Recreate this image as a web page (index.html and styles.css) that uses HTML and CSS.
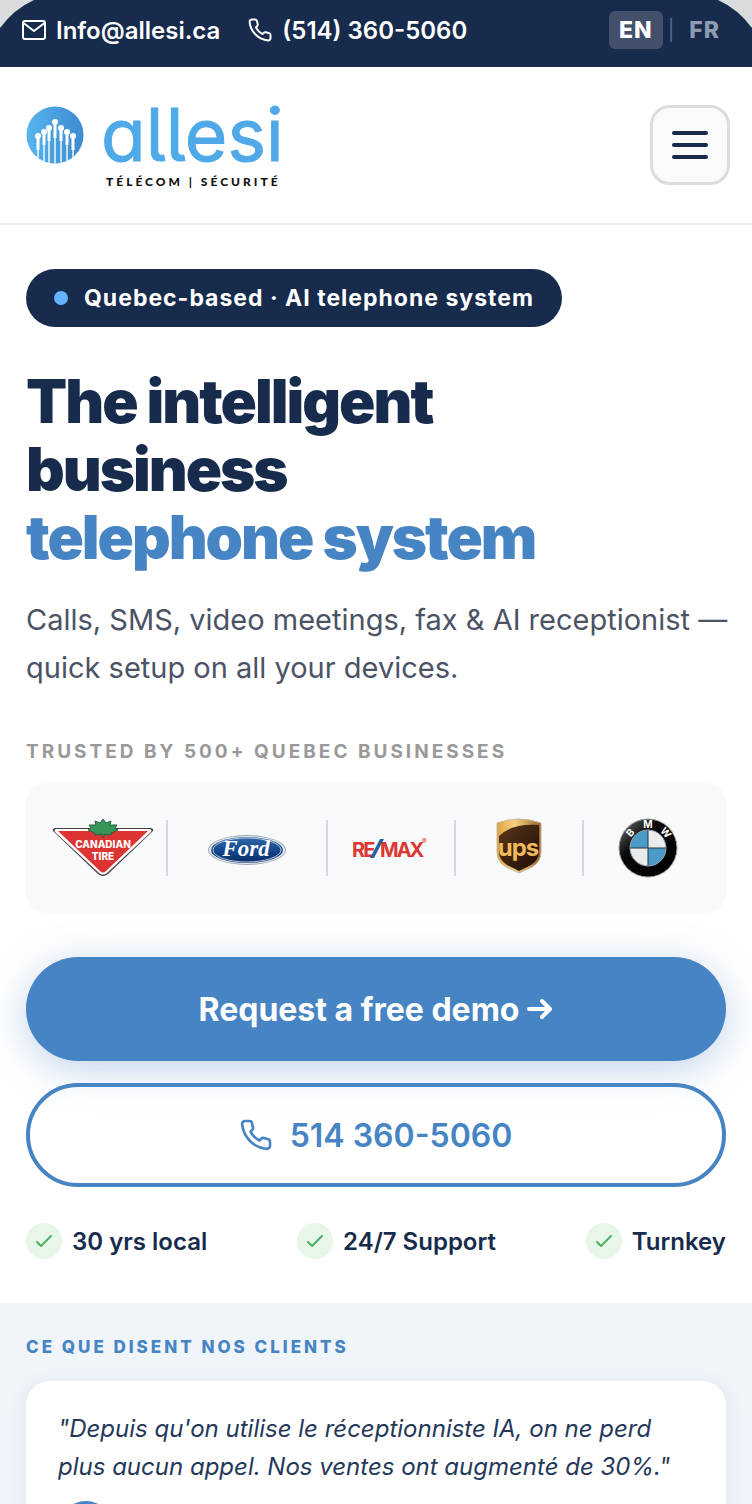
FILE: index.html
```html
<!DOCTYPE html>
<html lang="en">
<head>
    <meta charset="utf-8" />
    <meta name="viewport" content="width=device-width, initial-scale=1" />
    <title>Allesi</title>
    <link rel="stylesheet" href="styles.css">
</head>
<body>
    <div class="topbar">
        <svg class="corner corner-left" width="34" height="28" viewBox="0 0 34 28"><path d="M0 0H34Q14 9 0 28Z" /></svg>
        <svg class="corner corner-right" width="34" height="28" viewBox="0 0 34 28"><path d="M0 0H34V28Q20 9 0 0Z" /></svg>
        <div class="contacts">
            <a href="mailto:Info@allesi.ca">
                <svg class="icon" width="24" height="24" viewBox="0 0 24 24"><rect x="1" y="3" width="22" height="18" rx="2" /><path d="M1.500 5L12 13L22.500 5" /></svg>
                Info@allesi.ca
            </a>
            <a href="tel:5143605060">
                <svg class="icon" width="24" height="24" viewBox="0 0 24 24"><path d="M22.500 17v3.200a2.200 2.200 0 0 1-2.400 2.200A20.500 20.500 0 0 1 1.600 3.900 2.200 2.200 0 0 1 3.800 1.500H7a2 2 0 0 1 2 1.700c.1 1 .4 1.900.7 2.800a2 2 0 0 1-.5 2.100L7.900 9.500a16 16 0 0 0 6.600 6.600l1.400-1.300a2 2 0 0 1 2.100-.5c.9.300 1.800.6 2.800.7a2 2 0 0 1 1.700 2z" /></svg>
                (514) 360-5060
            </a>
        </div>
        <div class="langs">
            <button class="lang active" type="button">EN</button>
            <span class="lang-sep">|</span>
            <button class="lang" type="button">FR</button>
        </div>
    </div>

    <header class="header">
        <a class="logo" href="#" aria-label="Allesi">
            <svg width="256" height="96" viewBox="0 0 256 96">
                <defs>
                    <linearGradient id="ball" x1="0" x2="1"><stop offset="0" stop-color="#56b5ec" /><stop offset="1" stop-color="#3d8ad0" /></linearGradient>
                    <clipPath id="ballclip"><circle cx="29" cy="38" r="28.500" /></clipPath>
                </defs>
                <circle cx="29" cy="38" r="28.500" fill="url(#ball)" />
                <g clip-path="url(#ballclip)" stroke="#fff" fill="#fff">
                    <path d="M12 41V67M18 37V67M23 33V67M29 27V67M35 32V67M41 36V67M47 41V67" stroke-width="2" opacity=".7" />
                    <path d="M12 40V53M18 36V48M23 32V44M29 27V41M35 32V44M41 36V48M47 40V53" stroke-width="3" />
                    <g stroke="none"><circle cx="12" cy="39" r="3" /><circle cx="18" cy="35" r="3" /><circle cx="23" cy="31" r="3" /><circle cx="29" cy="25" r="3" /><circle cx="35" cy="31" r="3" /><circle cx="41" cy="35" r="3" /><circle cx="47" cy="39" r="3" /></g>
                </g>
                <text class="logo-name" x="75" y="64">allesi</text>
                <text class="logo-tag" x="80" y="89">TÉLÉCOM | SÉCURITÉ</text>
            </svg>
        </a>
        <button class="menu" type="button" aria-label="Menu">
            <span></span><span></span><span></span>
        </button>
    </header>

    <main class="hero">
        <div class="pill"><span class="dot"></span>Quebec-based · AI telephone system</div>
        <h1>The intelligent<br />business<br /><span>telephone system</span></h1>
        <p class="lead">Calls, SMS, video meetings, fax &amp; AI receptionist — quick setup on all your devices.</p>
        <p class="trusted">TRUSTED BY 500+ QUEBEC BUSINESSES</p>
        <div class="brands">
            <div class="brand">
                <svg width="104" height="60" viewBox="0 0 104 60">
                    <path d="M4 10H100Q104 11 101 14L57 56Q52 60 47 56L3 14Q0 11 4 10Z" fill="#4c3c3c" />
                    <path d="M5 11H99Q102 12 99 15L56 55Q52 58 48 55L5 15Q2 12 5 11Z" fill="#fff" />
                    <path d="M7 13H97L55 53Q52 56 49 53Z" fill="#dc3432" />
                    <path d="M52 1L55 5L60 3L59 7L66 7L64 10L67 12L60 15L60 17L53 16V19H51V16L44 17L44 15L37 12L40 10L38 7L45 7L44 3L49 5Z" fill="#36965a" stroke="#28633c" />
                    <text class="ct" x="52" y="30">CANADIAN</text>
                    <text class="ct" x="52" y="42">TIRE</text>
                </svg>
            </div>
            <div class="brand">
                <svg width="80" height="36" viewBox="0 0 80 36">
                    <defs><linearGradient id="ford" x1="0" x2="0" y1="0" y2="1"><stop offset="0" stop-color="#3369ab" /><stop offset=".5" stop-color="#15498d" /><stop offset="1" stop-color="#0a2b66" /></linearGradient></defs>
                    <ellipse cx="40" cy="20" rx="39" ry="15" fill="#9da5b0" />
                    <ellipse cx="40" cy="20" rx="38" ry="14" fill="#e7ebef" />
                    <ellipse cx="40" cy="20" rx="36" ry="13" fill="url(#ford)" />
                    <ellipse cx="40" cy="20" rx="34" ry="12" fill="none" stroke="#b7c9df" />
                    <text class="ford" x="39" y="26">Ford</text>
                </svg>
            </div>
            <div class="brand">
                <svg width="78" height="28" viewBox="0 0 78 28">
                    <text class="remax" x="0" y="23">RE</text>
                    <path d="M18 24L28 5H32L22 24Z" fill="#2560a8" />
                    <text class="remax" x="28" y="23">MAX</text>
                    <text class="reg" x="70" y="10">®</text>
                </svg>
            </div>
            <div class="brand">
                <svg width="46" height="60" viewBox="0 0 46 60">
                    <defs>
                        <linearGradient id="gold"><stop offset="0" stop-color="#e0a33f" /><stop offset=".4" stop-color="#f6d283" /><stop offset="1" stop-color="#986322" /></linearGradient>
                        <linearGradient id="brown" x1="0" x2="1" y1="0" y2="1"><stop offset="0" stop-color="#5b3718" /><stop offset="1" stop-color="#1c0c06" /></linearGradient>
                    </defs>
                    <path d="M1 5Q23-3 45 5V34Q45 44 36 49L23 55L10 49Q1 44 1 34Z" fill="url(#gold)" stroke="#c9b9a2" />
                    <path d="M3 18Q16 5 43 7V34Q43 42 35 47L23 53L11 47Q3 42 3 34Z" fill="url(#brown)" />
                    <text class="ups" x="22" y="38">ups</text>
                </svg>
            </div>
            <div class="brand">
                <svg width="60" height="60" viewBox="0 0 60 60">
                    <defs>
                        <linearGradient id="ring" x1="0" x2="1" y1="0" y2="1"><stop offset="0" stop-color="#74777a" /><stop offset=".35" stop-color="#08090a" /><stop offset="1" stop-color="#000" /></linearGradient>
                    </defs>
                    <circle cx="30" cy="30" r="29" fill="url(#ring)" stroke="#989b9d" />
                    <circle cx="30" cy="30" r="18" fill="#e9ebec" />
                    <path d="M30 30V12A18 18 0 0 0 12 30ZM30 30V48A18 18 0 0 0 48 30Z" fill="#4a9aca" />
                    <path d="M30 12V48M12 30H48" stroke="#26333c" />
                    <circle cx="30" cy="30" r="18" fill="none" stroke="#8e989f" />
                    <text class="bmw" x="30" y="10">M</text>
                    <text class="bmw" transform="rotate(-49 30 30)" x="30" y="10">B</text>
                    <text class="bmw" transform="rotate(49 30 30)" x="30" y="10">W</text>
                </svg>
            </div>
        </div>

        <a class="btn btn-primary" href="#demo">Request a free demo
            <svg class="arrow" width="26" height="24" viewBox="0 0 26 24"><path d="M2 12H23M15 4L23 12L15 20" /></svg>
        </a>
        <a class="btn btn-outline" href="tel:5143605060">
            <svg class="icon" width="32" height="32" viewBox="0 0 24 24"><path d="M22.500 17v3.200a2.200 2.200 0 0 1-2.400 2.200A20.500 20.500 0 0 1 1.600 3.900 2.200 2.200 0 0 1 3.800 1.500H7a2 2 0 0 1 2 1.700c.1 1 .4 1.900.7 2.800a2 2 0 0 1-.5 2.100L7.900 9.500a16 16 0 0 0 6.600 6.600l1.400-1.300a2 2 0 0 1 2.100-.5c.9.300 1.800.6 2.800.7a2 2 0 0 1 1.700 2z" /></svg>
            514 360-5060
        </a>

        <ul class="checks">
            <li><span class="tick"><svg width="20" height="20" viewBox="0 0 20 20"><path d="M3 11L7 15L17 5" /></svg></span>30 yrs local</li>
            <li><span class="tick"><svg width="20" height="20" viewBox="0 0 20 20"><path d="M3 11L7 15L17 5" /></svg></span>24/7 Support</li>
            <li><span class="tick"><svg width="20" height="20" viewBox="0 0 20 20"><path d="M3 11L7 15L17 5" /></svg></span>Turnkey</li>
        </ul>
    </main>

    <section class="reviews" lang="fr">
        <h2>CE QUE DISENT NOS CLIENTS</h2>
        <div class="card">
            <blockquote>"Depuis qu'on utilise le réceptionniste IA, on ne perd plus aucun appel. Nos ventes ont augmenté de 30%."</blockquote>
            <div class="avatar"></div>
        </div>
    </section>
</body>
</html>
```
FILE: styles.css
```css
* {
    padding: 0;
    margin: 0;
    box-sizing: border-box;
}

body {
    height: 100vh;
    overflow: hidden;
    background: #fff;
    color: #172b4d;
    font-family: Inter, "Liberation Sans", sans-serif;
}

a {
    color: inherit;
    text-decoration: none;
}

button {
    font-family: inherit;
    cursor: pointer;
}

.icon {
    fill: none;
    stroke: currentColor;
    stroke-width: 2;
    stroke-linecap: round;
    stroke-linejoin: round;
}

/* top bar */
.topbar {
    position: relative;
    display: flex;
    justify-content: space-between;
    align-items: center;
    padding: 11px 22px 18px;
    background: #172b4d;
    color: #fff;
}

.corner {
    position: absolute;
    top: 0;
    fill: #d9dbdd;
}

.corner-left {
    left: 0;
}

.corner-right {
    right: 0;
}

.contacts {
    display: flex;
    gap: 28px;
    font-size: 24px;
    font-weight: 600;
}

.contacts a {
    display: flex;
    align-items: center;
    gap: 10px;
}

.langs {
    display: flex;
    align-items: center;
    gap: 5px;
}

.lang {
    height: 38px;
    padding: 0 10px;
    border: none;
    border-radius: 6px;
    background: none;
    color: #8f9bb0;
    font-size: 23px;
    font-weight: 800;
    letter-spacing: 1px;
}

.lang.active {
    background: #43506b;
    color: #fff;
}

.lang-sep {
    color: #5d6a82;
    font-size: 20px;
}

/* header */
.header {
    display: flex;
    justify-content: space-between;
    align-items: center;
    padding: 30px 22px 30px 26px;
    border-bottom: 2px solid #ebebeb;
}

.logo svg {
    display: block;
    overflow: visible;
}

.logo-name {
    fill: #4fa9e8;
    stroke: #4fa9e8;
    stroke-width: 1;
    stroke-linejoin: round;
    font-size: 73px;
    font-weight: 400;
    font-feature-settings: "cv11", "cv05";
}

.logo-tag {
    fill: #111;
    font-family: Lato, sans-serif;
    font-size: 12px;
    font-weight: 900;
    letter-spacing: 3px;
}

.menu {
    display: flex;
    flex-direction: column;
    justify-content: center;
    align-items: center;
    gap: 8px;
    width: 80px;
    height: 80px;
    border: 3px solid #dcdcdc;
    border-radius: 20px;
    background: #fafafa;
}

.menu span {
    width: 36px;
    height: 4px;
    border-radius: 2px;
    background: #172b4d;
}

/* hero */
.hero {
    padding: 44px 26px;
}

.pill {
    display: flex;
    align-items: center;
    gap: 16px;
    width: fit-content;
    height: 58px;
    padding: 0 28px;
    border-radius: 29px;
    background: #172b4d;
    color: #fff;
    font-size: 23px;
    font-weight: 700;
    letter-spacing: 1px;
}

.dot {
    width: 14px;
    height: 14px;
    border-radius: 50%;
    background: #63b3ff;
}

h1 {
    margin-top: 40px;
    font-size: 60px;
    font-weight: 900;
    line-height: 68px;
    letter-spacing: -2px;
}

h1 span {
    color: #4784c4;
}

.lead {
    margin-top: 25px;
    margin-right: -10px;
    color: #4b5365;
    font-size: 29px;
    line-height: 48px;
}

.trusted {
    margin-top: 48px;
    color: #999;
    font-size: 19px;
    font-weight: 700;
    line-height: 24px;
    letter-spacing: 3px;
}

.brands {
    display: grid;
    grid-template-columns: 1fr 160px 1fr 1fr 1fr;
    align-items: center;
    height: 130px;
    margin-top: 19px;
    padding: 0 14px;
    border-radius: 20px;
    background: #f8f9fb;
}

.brand {
    display: flex;
    justify-content: center;
    align-items: center;
    height: 56px;
    border-right: 2px solid #d4d8e3;
}

.brand:last-child {
    border-right: none;
}

.brand svg {
    flex-shrink: 0;
}

.brand text {
    font-weight: 800;
    text-anchor: middle;
}

.brand .ct {
    fill: #fff;
    font-size: 10px;
}

.brand .ford {
    fill: #fff;
    font-family: "Liberation Serif", serif;
    font-size: 23px;
    font-style: italic;
    font-weight: 700;
}

.brand .remax {
    fill: #dc3732;
    font-size: 20px;
    font-weight: 700;
    letter-spacing: -2px;
    text-anchor: start;
}

.brand .reg {
    fill: #dc3732;
    font-size: 7px;
    font-weight: 400;
    text-anchor: start;
}

.brand .ups {
    fill: #f0b95b;
    font-size: 24px;
    font-weight: 700;
    letter-spacing: -1px;
}

.brand .bmw {
    fill: #fff;
    font-size: 10px;
    font-weight: 700;
}

.btn {
    display: flex;
    justify-content: center;
    align-items: center;
    height: 104px;
    border-radius: 52px;
    font-size: 32px;
}

.btn-primary {
    gap: 8px;
    margin-top: 44px;
    background: #4784c4;
    box-shadow: 0 8px 40px rgba(71, 132, 196, 0.35);
    color: #fff;
    font-weight: 700;
}

.arrow {
    fill: none;
    stroke: currentColor;
    stroke-width: 4;
    stroke-linecap: round;
    stroke-linejoin: round;
}

.btn-outline {
    gap: 18px;
    margin-top: 22px;
    border: 4px solid #4784c4;
    color: #4784c4;
    font-weight: 600;
}

.checks {
    display: flex;
    justify-content: space-between;
    margin-top: 36px;
    list-style: none;
    font-size: 24px;
    font-weight: 600;
}

.checks li {
    display: flex;
    align-items: center;
    gap: 10px;
}

.tick {
    display: flex;
    justify-content: center;
    align-items: center;
    width: 36px;
    height: 36px;
    border-radius: 50%;
    background: #e8f5e9;
}

.tick path {
    fill: none;
    stroke: #4caf64;
    stroke-width: 2;
    stroke-linecap: round;
    stroke-linejoin: round;
}

/* reviews */
.reviews {
    padding: 32px 26px;
    background: #f0f5fa;
}

h2 {
    color: #4784c4;
    font-size: 17px;
    font-weight: 800;
    line-height: 24px;
    letter-spacing: 3px;
}

.card {
    margin-top: 22px;
    padding: 29px 32px;
    border-radius: 24px;
    background: #fff;
    box-shadow: 0 4px 24px rgba(23, 43, 77, 0.08);
}

blockquote {
    color: #24385a;
    font-size: 24px;
    font-style: italic;
    line-height: 38px;
}

.avatar {
    width: 56px;
    height: 56px;
    margin-top: 15px;
    border-radius: 50%;
    background: #4784c4;
}
```
